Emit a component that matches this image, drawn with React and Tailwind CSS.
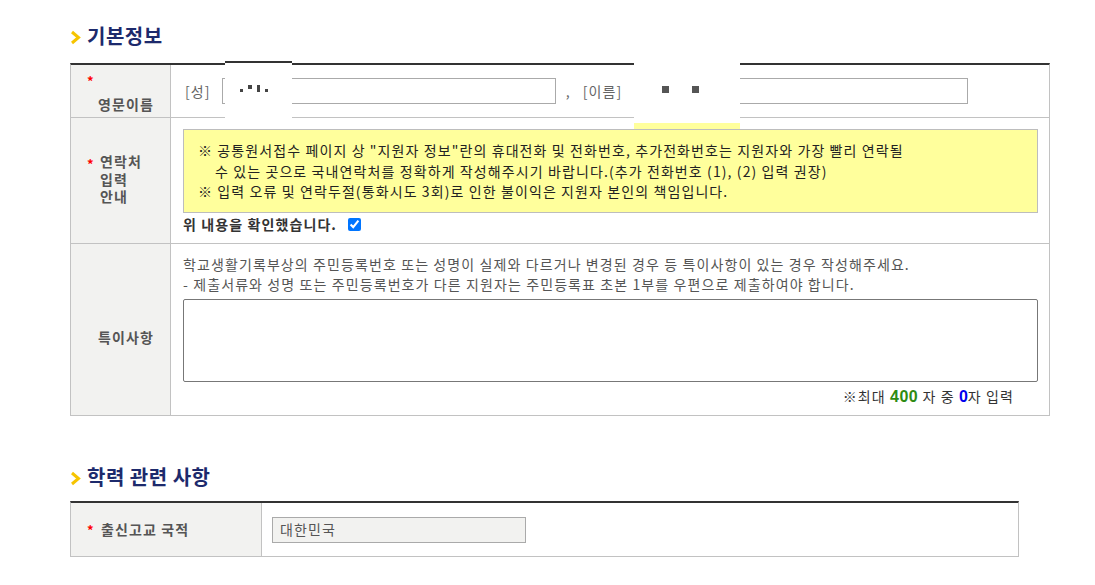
import React from 'react'

function Chevron() {
  return (
    <svg width="11" height="15" viewBox="0 0 11 15" className="mt-[7px] shrink-0">
      <path d="M2 2 L8.5 7.5 L2 13" fill="none" stroke="#f6c400" strokeWidth="3" />
    </svg>
  )
}

function SectionTitle({ children }) {
  return (
    <div className="flex items-start gap-[6px]">
      <Chevron />
      <h2 className="text-[20px] leading-[25px] tracking-[0.5px] font-bold text-[#1d2a6c]">{children}</h2>
    </div>
  )
}

function Star() {
  return <span className="text-[#f00] font-bold text-[13px] leading-none">*</span>
}

export default function App() {
  return (
    <div className="relative w-[1095px] h-[585px] overflow-hidden bg-white font-['Noto_Sans_CJK_KR','Noto_Sans',sans-serif] text-[14px] tracking-[1.1px]">
      <div className="pl-[70px] pt-[23px]">
        <SectionTitle>기본정보</SectionTitle>

        {/* table 1 */}
        <div className="mt-[15px] w-[980px] border-t-2 border-t-[#333] border-x border-x-[#c2c2c2]">
          {/* row 1 */}
          <div className="flex h-[53px] border-b border-[#c2c2c2]">
            <div className="w-[100px] shrink-0 bg-[#f2f2f0] border-r border-[#c2c2c2] pl-[16px] pt-[9px] flex flex-col">
              <Star />
              <span className="pl-[11px] mt-[8px] font-bold text-[#555] leading-[18px]">영문이름</span>
            </div>
            <div className="flex items-center pl-[14px] text-[14px] text-[#666]">
              <span>[성]</span>
              <div className="ml-[11px] w-[334px] h-[26px] border border-[#aaa]" />
              <span className="ml-[10px] mr-[12px]">,</span>
              <span>[이름]</span>
              <div className="ml-[12px] w-[334px] h-[26px] border border-[#aaa]" />
            </div>
          </div>

          {/* row 2 */}
          <div className="flex h-[126px] border-b border-[#c2c2c2]">
            <div className="w-[100px] shrink-0 bg-[#f2f2f0] border-r border-[#c2c2c2] flex items-center pl-[16px] pb-[2px]">
              <div className="flex items-start">
                <span className="mt-[4px] w-[13px] text-[#f00] font-bold text-[13px] leading-none">*</span>
                <div className="font-bold text-[#555] leading-[17.5px]">
                  <div>연락처</div>
                  <div>입력</div>
                  <div>안내</div>
                </div>
              </div>
            </div>
            <div className="flex-1 pl-[12px] pr-[11px] pt-[11px]">
              <div className="h-[84px] bg-[#ffff9c] border border-[#bdbdbd] pl-[14px] pt-[10px] text-[#222] leading-[20.5px]">
                <p>※ 공통원서접수 페이지 상 "지원자 정보"란의 휴대전화 및 전화번호, 추가전화번호는 지원자와 가장 빨리 연락될</p>
                <p className="pl-[17px]">수 있는 곳으로 국내연락처를 정확하게 작성해주시기 바랍니다.(추가 전화번호 (1), (2) 입력 권장)</p>
                <p>※ 입력 오류 및 연락두절(통화시도 3회)로 인한 불이익은 지원자 본인의 책임입니다.</p>
              </div>
              <label className="flex items-center mt-[1px] h-[20px] font-bold text-[#333]">
                위 내용을 확인했습니다.
                <input type="checkbox" defaultChecked className="ml-[11px] w-[13px] h-[13px]" />
              </label>
            </div>
          </div>

          {/* row 3 */}
          <div className="flex h-[172px] border-b border-[#c2c2c2]">
            <div className="w-[100px] shrink-0 bg-[#f2f2f0] border-r border-[#c2c2c2] flex items-center pl-[27px] pt-[16px]">
              <span className="font-bold text-[#555]">특이사항</span>
            </div>
            <div className="flex-1 pl-[12px] pr-[11px] pt-[10px] text-[#555]">
              <p className="leading-[20px]">학교생활기록부상의 주민등록번호 또는 성명이 실제와 다르거나 변경된 경우 등 특이사항이 있는 경우 작성해주세요.</p>
              <p className="leading-[20px]">- 제출서류와 성명 또는 주민등록번호가 다른 지원자는 주민등록표 초본 1부를 우편으로 제출하여야 합니다.</p>
              <textarea className="mt-[5px] block w-full h-[83px] border border-[#777] rounded-[2px] resize-none" />
              <div className="mt-[4px] pr-[24px] text-right text-[#333] text-[14px] leading-[20px]">
                ※최대 <span className="font-['Liberation_Sans',sans-serif] font-bold text-[16px] tracking-[0.5px] text-[#2e8b12]">400</span> 자 중 <span className="font-['Liberation_Sans',sans-serif] font-bold text-[16px] tracking-normal text-[#0000ee]">0</span>자 입력
              </div>
            </div>
          </div>
        </div>

        <div className="mt-[48px]">
          <SectionTitle>학력 관련 사항</SectionTitle>
        </div>

        {/* table 2 */}
        <div className="mt-[12px] w-[949px] border-t-2 border-t-[#333] border-x border-x-[#c2c2c2]">
          <div className="flex h-[54px] border-b border-[#c2c2c2]">
            <div className="w-[191px] shrink-0 bg-[#f2f2f0] border-r border-[#c2c2c2] flex items-center pl-[16px]">
              <span className="w-[14px] text-[#f00] font-bold text-[13px] leading-none">*</span>
              <span className="font-bold text-[#555]">출신고교 국적</span>
            </div>
            <div className="flex items-center pl-[10px]">
              <div className="w-[254px] h-[26px] bg-[#f2f2f0] border border-[#aaa] pl-[7px] flex items-center text-[#555]">
                대한민국
              </div>
            </div>
          </div>
        </div>
      </div>

      {/* redaction patches */}
      <div className="absolute left-[225px] top-[61px] w-[67px] h-[58px] bg-white border-t-2 border-[#333]">
        <div className="absolute left-[15px] top-[26px] w-[3px] h-[3px] bg-[#444]" />
        <div className="absolute left-[23px] top-[22px] w-[4px] h-[4px] bg-[#444]" />
        <div className="absolute left-[32px] top-[22px] w-[3px] h-[7px] bg-[#444]" />
        <div className="absolute left-[40px] top-[26px] w-[3px] h-[3px] bg-[#444]" />
      </div>
      <div className="absolute left-[634px] top-[50px] w-[106px] h-[79px] bg-white">
        <div className="absolute left-[28px] top-[36px] w-[7px] h-[7px] bg-[#555]" />
        <div className="absolute left-[58px] top-[36px] w-[7px] h-[7px] bg-[#555]" />
        <div className="absolute left-0 bottom-0 w-full h-[6px] bg-[#ffff9c]" />
      </div>
    </div>
  )
}
